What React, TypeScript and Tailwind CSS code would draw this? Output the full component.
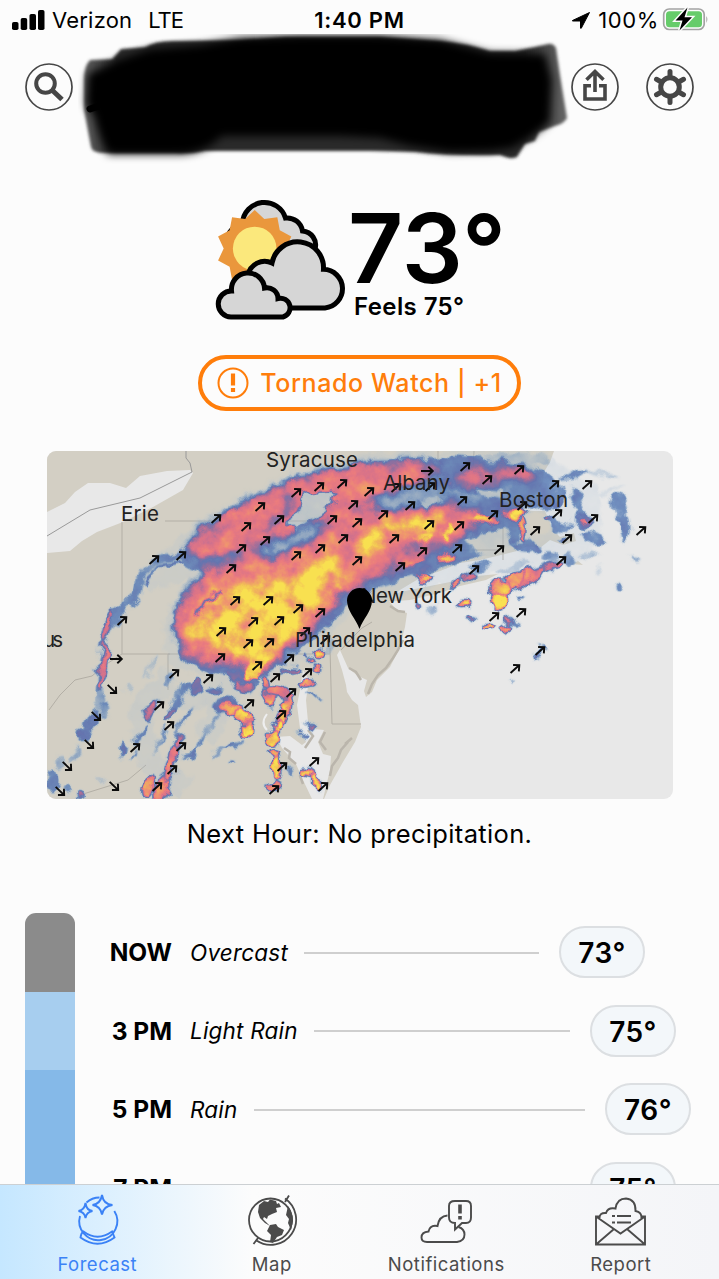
import type { ReactNode } from "react";

const hours = [
  { time: "NOW", summary: "Overcast", temp: 73, bar: "bg-[#8b8b8b]", inset: "mr-[74px]" },
  { time: "3 PM", summary: "Light Rain", temp: 75, bar: "bg-[#a7ceef]", inset: "mr-[43px]" },
  { time: "5 PM", summary: "Rain", temp: 76, bar: "bg-[#85b9e8]", inset: "mr-[28px]" },
  { time: "7 PM", summary: "", temp: 75, bar: "bg-[#85b9e8]", inset: "mr-[43px]" },
];

const cities = [
  { name: "Syracuse", x: 266, y: 467, width: 92 },
  { name: "Erie", x: 121, y: 521, width: 38 },
  { name: "Albany", x: 383, y: 490, width: 67 },
  { name: "Boston", x: 499, y: 507, width: 69 },
  { name: "New York", x: 361, y: 603, width: 91 },
  { name: "us", x: 43, y: 647, width: 20 },
  { name: "Philadelphia", x: 295, y: 647, width: 120 },
];

// wind markers: x, y
const windNE = [
  [216, 519], [154, 560], [181, 556], [260, 507], [246, 527], [241, 549], [231, 569], [265, 541],
  [279, 520], [296, 493], [319, 487], [342, 484], [353, 505], [332, 520], [357, 523], [343, 539],
  [320, 549], [296, 556], [357, 561], [235, 601], [268, 601], [298, 609], [320, 613], [253, 622],
  [279, 621], [122, 621], [369, 492], [396, 488], [465, 467], [487, 480], [519, 470], [554, 485],
  [587, 485], [430, 487], [383, 515], [410, 506], [462, 501], [429, 525], [493, 515], [459, 526],
  [394, 539], [522, 506], [557, 514], [593, 519], [535, 531], [567, 539], [641, 531], [422, 552],
  [457, 549], [499, 550], [561, 561], [400, 567], [474, 570], [494, 617], [521, 613], [515, 669],
  [540, 651], [221, 632], [248, 644], [269, 643], [220, 658], [257, 666], [289, 659], [275, 678],
  [307, 673], [208, 679], [174, 674], [159, 706], [169, 726], [135, 748], [181, 747], [172, 770],
  [157, 787], [249, 704], [291, 693], [281, 715], [282, 767], [274, 790], [314, 762], [323, 787],
  [305, 632], [325, 640],
];
const windSE = [[112, 689], [96, 716], [89, 744], [67, 766], [114, 786], [60, 791]];
const windE = [[427, 471], [116, 659]];

// small echoes: x, y, rx, ry, rotation, intensity (0-255)
const cells = [
  [108, 630, 3, 16, 15, 165], [103, 665, 3, 24, 6, 170], [100, 700, 7, 12, 0, 60], [92, 722, 7, 12, 20, 95],
  [84, 735, 6, 9, 0, 100], [105, 712, 5, 9, 0, 75], [75, 755, 4, 10, 30, 60], [60, 762, 6, 8, 20, 55],
  [52, 780, 6, 11, 0, 90], [66, 790, 6, 5, 0, 70], [80, 795, 4, 3, 0, 120], [100, 780, 5, 3, 0, 40],
  [150, 712, 4, 10, 35, 145], [170, 712, 3.5, 12, 25, 120], [140, 735, 3, 11, 25, 85], [122, 752, 3, 8, 10, 105],
  [135, 755, 2, 9, 30, 80], [160, 740, 2.5, 16, 30, 70], [185, 720, 2.5, 20, 30, 75], [176, 700, 4, 9, 30, 85],
  [148, 786, 4, 10, 10, 205], [162, 788, 6, 15, 20, 195], [172, 762, 4.5, 20, 18, 180], [179, 742, 2.5, 8, 15, 155],
  [190, 752, 3, 11, 45, 85], [208, 730, 3, 20, 35, 75], [218, 752, 3, 10, 40, 60], [235, 744, 12, 2, -20, 90],
  [232, 760, 3, 2, 0, 100], [170, 680, 9, 5, -40, 75], [195, 686, 8, 7, -35, 115], [150, 665, 3, 12, 20, 45],
  [130, 690, 4, 6, 0, 40], [215, 690, 9, 4, 0, 100], [240, 680, 18, 5, 20, 110], [245, 686, 8, 4, 20, 165],
  [184, 690, 3, 11, 10, 90], [225, 705, 12, 8, -20, 100], [233, 709, 12, 5, 10, 205], [243, 716, 8, 6, 30, 215],
  [248, 729, 3.5, 8, -5, 240], [270, 698, 6, 10, 10, 195], [279, 692, 12, 5, 20, 185], [288, 704, 3.5, 11, 5, 220],
  [280, 719, 3.5, 9, 25, 225], [276, 728, 3, 7, 10, 240], [272, 737, 4.5, 6, 0, 225], [276, 765, 3.5, 14, 0, 240],
  [275, 787, 7, 4, 10, 210], [273, 753, 4.5, 3, 0, 210], [288, 770, 4, 6, 0, 80], [309, 774, 8, 2.5, 10, 240],
  [317, 784, 3, 8, -8, 245], [308, 685, 8, 2, 0, 230], [316, 669, 5, 2.5, 0, 245], [291, 670, 9, 3, -10, 130],
  [313, 696, 8, 2, 0, 95], [311, 725, 4, 2, 0, 150], [302, 734, 5, 1.5, 0, 120], [322, 653, 3.5, 3.5, 0, 225],
  [313, 660, 3, 1.5, 0, 200], [306, 656, 2, 2, 0, 130], [330, 645, 5, 7, 0, 50], [265, 683, 3.5, 6, 0, 180],
  [546, 568, 14, 4, -25, 175], [530, 577, 16, 5, -35, 190], [512, 583, 14, 6, -30, 205], [499, 590, 8, 8, 0, 210],
  [498, 602, 6.5, 7, 0, 255], [425, 577, 8, 1.5, 0, 230], [455, 585, 2.5, 4, 0, 190], [467, 577, 8, 2.5, -25, 150],
  [462, 603, 6, 2, -15, 220], [418, 605, 3, 2, 0, 150], [432, 611, 4, 6, 30, 55], [470, 617, 3, 1.5, -10, 150],
  [488, 625, 4, 1.5, 0, 240], [505, 627, 5, 2, -20, 240], [511, 620, 3.5, 2, 0, 200], [517, 623, 4, 2.5, 0, 90],
  [535, 656, 6, 2.5, -40, 120], [543, 650, 4, 3, -30, 70], [511, 680, 3, 1.5, -25, 75], [520, 596, 5, 1.5, 0, 120],
  [600, 474, 20, 3, 12, 42], [612, 490, 14, 3, -20, 25], [620, 508, 8, 14, -20, 80], [626, 530, 5, 14, 0, 85],
  [582, 520, 9, 9, 0, 100], [581, 521, 3.5, 2.5, 0, 175], [594, 538, 12, 6, 20, 80], [634, 557, 8, 3, 10, 66],
  [620, 586, 4, 4, 0, 80], [600, 570, 3, 4, 0, 35], [570, 559, 9, 7, -20, 70], [548, 556, 8, 5, 0, 70],
  [577, 500, 5, 16, -25, 80], [515, 568, 18, 5, -20, 45], [480, 566, 12, 4, -10, 75], [562, 540, 4, 2, 0, 130],
  [550, 519, 6, 2, 10, 150], [575, 475, 14, 3, -25, 80], [590, 555, 7, 4, 0, 50], [527, 546, 14, 7, 0, 85],
  [560, 525, 14, 6, 20, 85],
];

function RadarMap() {
  return (
    <svg
      viewBox="47 451 626 348"
      role="img"
      aria-label="Precipitation radar"
      className="mx-auto h-[348px] w-[626px] shrink-0 rounded-[9px]"
    >
      <defs>
        <filter id="radar" filterUnits="userSpaceOnUse" x="37" y="441" width="646" height="368" colorInterpolationFilters="sRGB">
          <feTurbulence type="fractalNoise" baseFrequency="0.06" numOctaves="3" seed="7" result="warp" />
          <feGaussianBlur in="SourceGraphic" stdDeviation="1" result="soft" />
          <feDisplacementMap in="soft" in2="warp" scale="15" xChannelSelector="R" yChannelSelector="G" result="field" />
          <feTurbulence type="fractalNoise" baseFrequency="0.05" numOctaves="5" seed="21" />
          <feColorMatrix values="1 0 0 0 0  1 0 0 0 0  1 0 0 0 0  0 0 0 0 1" result="grain" />
          <feComposite in="field" in2="grain" operator="arithmetic" k1="0.7" k2="0.66" k3="0" k4="0" result="level" />
          <feColorMatrix in="level" values="0 0 0 0 0  0 0 0 0 0  0 0 0 0 0  1 0 0 0 0" />
          <feComponentTransfer result="mask">
            <feFuncA type="table" tableValues="0 .2 .55 .85 .93 .96 .97 .97 .97 .97 .97" />
          </feComponentTransfer>
          <feComponentTransfer in="level">
            <feFuncR type="table" tableValues=".70 .62 .49 .36 .36 .56 .83 .92 .94 .95 .98" />
            <feFuncG type="table" tableValues=".79 .73 .62 .50 .43 .42 .43 .47 .58 .74 .88" />
            <feFuncB type="table" tableValues=".88 .83 .77 .72 .68 .61 .54 .49 .42 .33 .30" />
          </feComponentTransfer>
          <feComposite in2="mask" operator="in" />
          <feGaussianBlur stdDeviation="0.5" />
        </filter>
        <filter id="spread" filterUnits="userSpaceOnUse" x="37" y="441" width="646" height="368" colorInterpolationFilters="sRGB">
          <feGaussianBlur stdDeviation="4" />
        </filter>
        <path id="wind" d="M-6 0H5.500M1.300 -4.300L5.800 0L1.300 4.300" fill="none" stroke="#0b0b0b" strokeWidth="1.9" />
      </defs>

      <rect x="47" y="451" width="626" height="348" fill="#e8e8e8" />
      <path
        fill="#d3cfc4"
        d="M47 451H554L550 462L544 472L543 482L537 492L529 500L524 510L533 511L545 511L549 520L553 530L560 537L574 533L576 541L563 545L550 540L540 548L528 546L517 551L497 556L480 560L460 563L440 571L420 578L400 590L388 600L396 609L407 613L405 627L400 647L390 667L377 680L372 692L366 697L364 691L367 680L358 676L348 668L340 650L337 655L342 670L346 685L347 692L352 700L358 705L361 727L355 742L343 762L330 785L324 799H47Z"
      />
      <path fill="#d3cfc4" d="M384 602L400 592L425 587L450 582L466 577L498 574L486 580L460 586L440 593L410 600ZM572 564L578 561L583 565Z" />
      <path
        fill="#e8e8e8"
        d="M47 512L65 503L75 492L88 483L110 483L126 488L140 476L167 471L190 470L193 473L183 490L153 507L123 522L97 532L82 541L70 551L47 553Z"
      />
      <path
        fill="#e8e8e8"
        d="M303 670L309 680L306 700L308 722L314 729L324 730L318 742L323 754L331 756L330 770L323 799H312L303 780L296 764L282 748L276 737L290 736L302 745L306 742L300 728L297 705L300 690Z"
      />
      <g fill="none" stroke="#b3afa6" strokeWidth="1">
        <path d="M47 536L90 510L140 498L192 472L190 463L186 458V451" stroke="#999" />
        <path d="M122 522V654H170M122 654L105 665L92 676L75 680L60 695L49 710" />
        <path d="M165 521H340M168 654H330M330 648L332 724H361M168 654V690M438 451V560M474 451L472 490M503 500V560M421 550H500" />
        <path d="M341 650L350 640L362 628L372 622M146 765L128 780L80 795" />
        <path
          d="M308 730L313 736L309 742L305 748M284 748L290 752L289 758L296 764M306 770L300 776L303 784M348 742L341 750L338 758L332 766L330 776M325 732L320 742L326 750"
          stroke="#bab5ac"
          strokeWidth="2.500"
        />
        <path
          d="M403 640L398 650L393 658L386 668L378 675L372 684L368 694M390 606L398 611L405 612M349 668L356 672L361 680M345 744L352 738"
          stroke="#bbb6ac"
          strokeWidth="2.500"
        />
        <path d="M267 714Q260 723 267 730" stroke="#eee" strokeWidth="2" />
      </g>

      <g filter="url(#radar)">
        <rect x="37" y="441" width="646" height="368" fill="#000" />
        {/* faint halo */}
        <path
          fill="#141414"
          d="M200 520L260 488L330 462L380 450H545L575 475L600 488L602 540L580 560L545 568L500 572L440 585L350 612L310 660L240 690L165 665L165 620L185 580L150 590L140 570Z"
        />
        <path fill="none" stroke="#161616" strokeWidth="24" d="M172 672L140 715L150 760L185 790M170 700L230 690L205 740" />
        {/* rain shield */}
        <path
          fill="#585858"
          d="M182 552L200 530L235 507L265 492L295 478L330 470L375 461L430 457L500 461L545 474L560 484L565 495L560 508L540 505L520 512L522 535L508 548L490 552L460 560L435 571L400 580L370 590L345 605L330 625L300 650L280 668L245 682L215 675L190 665L174 645L172 622L182 597L205 573L186 566Z"
        />
        <path fill="none" stroke="#505050" strokeWidth="8" d="M190 553L160 560L142 576L136 596L118 615L108 630L102 660L99 690" />
        <path fill="none" stroke="#808080" strokeWidth="2.500" d="M185 562L162 566L146 583" />
        <g filter="url(#spread)">
          <path
            fill="#aaa"
            d="M186 552L200 530L237 506L270 491L300 477L330 470L375 463L425 460L445 466L430 480L395 490L365 500L350 520L325 530L310 532L280 545L245 555L220 552L200 558Z"
          />
          <path
            fill="#acacac"
            d="M175 638L177 615L187 590L208 571L245 558L290 545L325 530L342 505L375 505L400 508L450 506L480 510L475 525L462 536L440 552L405 566L370 580L340 596L320 620L290 650L258 674L225 664L190 657Z"
          />
          <path fill="#989898" d="M450 478L480 470L525 464L535 474L500 482L470 496L445 502Z" />
          <path
            fill="#bababa"
            d="M181 636L187 606L203 583L250 568L290 556L330 546L360 525L395 512L440 508L450 520L430 540L395 550L365 567L340 590L318 618L285 648L257 668L225 657L195 650Z"
          />
          <path
            fill="#dadada"
            d="M188 634L194 612L208 592L250 582L290 566L330 555L346 563L338 590L316 614L285 646L260 672L245 664L222 648Z"
          />
          <path
            fill="#f2f2f2"
            d="M204 627L212 605L250 597L285 580L322 566L334 576L324 597L298 622L282 645L258 668L248 660L262 634L240 638L215 642Z"
          />
          <ellipse cx="374" cy="540" rx="22" ry="8" fill="#eee" transform="rotate(-28 374 540)" />
          <ellipse cx="422" cy="522" rx="18" ry="9" fill="#f2f2f2" />
        </g>
        <path fill="#f0f0f0" d="M248 645L275 640L256 682L247 678Z" />
        <ellipse cx="448" cy="533" rx="3" ry="8" fill="#e8e8e8" />
        <ellipse cx="424" cy="536" rx="10" ry="2.500" fill="#ececec" />
        <ellipse cx="483" cy="520" rx="14" ry="6" fill="#b8b8b8" />
        <ellipse cx="483" cy="520" rx="10" ry="4" fill="#e8e8e8" />
        <ellipse cx="515" cy="515" rx="12" ry="6" fill="#b8b8b8" />
        <ellipse cx="515" cy="515" rx="9" ry="4" fill="#eee" />
        <ellipse cx="524" cy="530" rx="3" ry="10" fill="#e0e0e0" />
        <ellipse cx="446" cy="558" rx="11" ry="3" fill="#e0e0e0" transform="rotate(-20 446 558)" />
        <ellipse cx="412" cy="561" rx="9" ry="3" fill="#ccc" transform="rotate(-20 412 561)" />
        {/* dry slots */}
        <g filter="url(#spread)">
          <path fill="none" stroke="#303030" strokeWidth="13" d="M264 552L292 542L320 524" />
          <path fill="none" stroke="#484848" strokeWidth="5" d="M292 497L280 520L262 532" />
          <path fill="none" stroke="#383838" strokeWidth="12" d="M378 503L410 497L450 491L480 498" />
          <path fill="none" stroke="#505050" strokeWidth="5" d="M405 551L422 545L440 543M385 575L410 567L435 556" />
        </g>
        <path fill="none" stroke="#606060" strokeWidth="3.500" d="M196 616L204 604L222 594" />
        <path fill="#202020" d="M304 493L334 490L331 503L322 516L295 531L288 525L298 510Z" />
        <path fill="none" stroke="#2c2c2c" strokeWidth="8" d="M478 490L502 494M475 545L510 534M425 503L440 498" />
        <path fill="#1c1c1c" d="M465 538L505 528L512 548L480 554Z" />
        <path fill="#2c2c2c" d="M480 456L545 452L548 466L500 462Z" />
        <ellipse cx="540" cy="523" rx="12" ry="13" fill="#000" />
        {cells.map(([x, y, rx, ry, rot, level], i) => (
          <g key={i} transform={`translate(${x} ${y}) rotate(${rot})`}>
            {level > 130 && <ellipse rx={rx + 2} ry={ry + 2} fill="#505050" />}
            {level > 200 && <ellipse rx={rx + 1} ry={ry + 1} fill="#a8a8a8" />}
            <ellipse rx={rx} ry={ry} fill={`rgb(${level},${level},${level})`} />
          </g>
        ))}
      </g>

      <g>
        {windNE.map(([x, y], i) => (
          <use key={i} href="#wind" transform={`translate(${x} ${y}) rotate(-42)`} />
        ))}
        {windSE.map(([x, y], i) => (
          <use key={i} href="#wind" transform={`translate(${x} ${y}) rotate(44)`} />
        ))}
        {windE.map(([x, y], i) => (
          <use key={i} href="#wind" transform={`translate(${x} ${y})`} />
        ))}
      </g>
      {cities.map((city) => (
        <text
          key={city.name}
          x={city.x}
          y={city.y}
          textLength={city.width}
          className="fill-[#222] font-['Inter',sans-serif] text-[20.500px]"
        >
          {city.name}
        </text>
      ))}
      <path d="M359.500 629C356 619 347 611 347 600.500A12.500 12.500 0 0 1 372 600.500C372 611 363 619 359.500 629Z" fill="#000" />
    </svg>
  );
}

function WeatherIcon() {
  const rays = Array.from({ length: 20 }, (_, i) => {
    const r = i % 2 ? 31 : 38.5;
    const a = (i * Math.PI) / 10;
    return `${254.7 + r * Math.sin(a)},${248.5 - r * Math.cos(a)}`;
  }).join(" ");

  return (
    <svg viewBox="214 198 134 124" className="h-[124px] w-[134px]">
      <g fill="#d6d6d6" stroke="#000" strokeWidth="5">
        <path d="M227 238Q231 226 242.500 223A22 22 0 0 1 285.500 218A15.500 15.500 0 0 1 302.500 231A14 14 0 0 1 315 249L300 270H250Z" />
        <polygon points={rays} fill="#ea973c" stroke="none" />
        <circle cx="254.700" cy="248.500" r="21.800" fill="#fbe87c" stroke="none" />
        <path d="M248 275A17 17 0 0 1 272 263A26 26 0 0 1 323.500 269.300A19.400 19.400 0 0 1 325 308H262Z" />
        <path d="M231 317A13 13 0 0 1 231.500 291A16 16 0 0 1 264.500 288A11 11 0 0 1 278 298.500A9.500 9.500 0 0 1 283 317Z" />
      </g>
    </svg>
  );
}

function StatusBar() {
  return (
    <div className="flex h-10 shrink-0 items-center justify-between pr-[9px] pl-3 text-[22px] leading-none">
      <div className="flex w-[240px] items-center">
        <svg viewBox="0 0 33 20" className="h-5 w-[33px]">
          <rect y="12" width="6.500" height="8" rx="1.800" />
          <rect x="8.700" y="8" width="6.500" height="12" rx="1.800" />
          <rect x="17.500" y="4" width="6.500" height="16" rx="1.800" />
          <rect x="26" width="6.500" height="20" rx="1.800" />
        </svg>
        <span className="ml-[7px] tracking-[0.2px]">Verizon</span>
        <span className="ml-4 tracking-[-1px]">LTE</span>
      </div>
      <span className="-ml-[3px] font-semibold tracking-[0.700px]">1:40 PM</span>
      <div className="flex w-[240px] items-center justify-end">
        <svg viewBox="0 0 18 17" className="h-[17px] w-[18px]">
          <path d="M17.500 0.500L0.500 8.500Q0 9 .8 9H8.500V16Q8.700 17 9.400 16Z" stroke="#000" strokeWidth="1" />
        </svg>
        <span className="ml-2 tracking-[0.600px]">100%</span>
        <svg viewBox="0 0 48 26" className="ml-[3px] h-[26px] w-[48px]">
          <rect x="1.700" y="2" width="40.500" height="20.500" rx="5.500" fill="none" stroke="#a3a3a3" strokeWidth="1.700" />
          <rect x="4" y="4.300" width="36" height="16" rx="3.500" fill="#66cc6a" />
          <path d="M44.300 9Q46.500 12 44.300 16Z" fill="#a3a3a3" />
          <path d="M25.500 .5L13.500 13.500H20.500L17.500 23.500L30 10.300H22.500Z" stroke="#fcfcfc" strokeWidth="3" paintOrder="stroke" />
        </svg>
      </div>
    </div>
  );
}

function RoundButton({ label, children }: { label: string; children: ReactNode }) {
  return (
    <button aria-label={label} className="h-12 w-12">
      <svg viewBox="0 0 48 48" fill="none" stroke="#464646" className="h-12 w-12">
        <circle cx="24" cy="24" r="23" strokeWidth="1.700" />
        {children}
      </svg>
    </button>
  );
}

function Header() {
  return (
    <header className="relative flex h-[94px] shrink-0 items-center pr-[25px] pl-[25px]">
      <RoundButton label="Search">
        <circle cx="20.500" cy="20.500" r="9.300" strokeWidth="4" />
        <path d="M27.500 27.500L37 36.500" strokeWidth="5" />
      </RoundButton>
      <div className="ml-auto flex gap-[27px]">
        <RoundButton label="Share">
          <path d="M20 22.700H14V36H34V22.700H28M24 29V9M15.500 16.700L24 8.500L32.500 16.700" strokeWidth="3.600" />
        </RoundButton>
        <RoundButton label="Settings">
          <circle cx="24" cy="24" r="9.300" strokeWidth="5" />
          <path
            d="M24 14V8.500M24 34V39.500M15.300 19L10.500 16.300M32.700 19L37.500 16.300M15.300 29L10.500 31.700M32.700 29L37.500 31.700"
            strokeWidth="5"
            strokeLinecap="round"
          />
        </RoundButton>
      </div>
      {/* marker strokes covering the place name */}
      <svg viewBox="78 34 496 130" className="absolute -top-[6px] left-[78px] h-[130px] w-[496px]">
        <defs>
          <filter id="edge">
            <feGaussianBlur stdDeviation="1.500" />
          </filter>
          <filter id="ink">
            <feGaussianBlur stdDeviation="4" />
          </filter>
          <linearGradient id="side" x1="78" x2="574" gradientUnits="userSpaceOnUse">
            <stop offset="0" stopColor="#666" />
            <stop offset=".08" stopColor="#2a2a2a" />
            <stop offset=".9" stopColor="#2a2a2a" />
            <stop offset="1" stopColor="#707070" />
          </linearGradient>
        </defs>
        <path
          filter="url(#edge)"
          fill="url(#side)"
          d="M90 60L112 59L121 49L145 47Q155 41 172 41L240 40L285 37H380L440 41Q465 43 490 51H515Q535 47 548 44Q553 43 556 48L560 75L567 118Q565 123 555 126L539 132L535 141L525 144L517 157Q511 160 500 155Q450 156 415 152L370 151H205Q190 154 175 153H105Q92 153 91 147L84 110L84 80Q84 66 90 60Z"
        />
        <path
          filter="url(#ink)"
          d="M88 74L118 60L150 49L200 45L240 38L300 36H380L440 40L490 53L545 54L552 80L550 122L535 134L512 148L490 151L450 152L410 146L380 138L340 136H222Q205 153 180 154H108Q100 140 94 116L86 105Z"
        />
        <path d="M90 109L96 107" stroke="#000" strokeWidth="7" strokeLinecap="round" />
      </svg>
    </header>
  );
}

const tabs: { label: string; icon: ReactNode; active?: boolean }[] = [
  {
    label: "Forecast",
    active: true,
    icon: (
      <g strokeWidth="1.900">
        <path d="M10 24A19 19 0 1 0 44.300 19M16.500 10.500Q22 5.500 29.500 5.500" />
        <path d="M32 3Q33.500 12.500 42.500 13Q33.500 14 32 22.500Q30.500 14 22.500 13Q30.500 12 32 3Z" />
        <path d="M15.500 11Q16.500 18.500 22.500 19Q16.500 20 15.500 26Q14.500 20 8.500 19Q14.500 18 15.500 11Z" />
        <path d="M13.500 39.500Q11 41 10.500 45.500Q27.500 58 44.500 45.500L42 39.500Q27.500 50 13.500 39.500Z" />
      </g>
    ),
  },
  {
    label: "Map",
    icon: (
      <g strokeWidth="1.800">
        <circle cx="26.500" cy="28" r="21.500" />
        <path d="M41 6.500A25 25 0 1 1 12.500 48.500M41 10L45 3.500M14 46L9.500 52" />
        <path
          d="M15 13L20 9L24 10L26 7.500L32 9L33 12L35 11L37 15L32 16L33 20L28 22L24 24L23 27L20 25L19 27L22 30L26 34L21 31L16 26L14 20Z M26 33L32 32L34 35L40 38L38 43L33 45L29 51L26 50L27 43L23 39Z M44 14Q49 21 49 29L47 38L44 31L45 27L42 23Z"
          fill="currentColor"
          stroke="none"
        />
      </g>
    ),
  },
  {
    label: "Notifications",
    icon: (
      <g strokeWidth="1.900">
        <path d="M28.500 23.500Q20 24 18.500 34Q11 32.500 9.500 39.500Q2.500 40 2.500 45.500Q2.500 50 8 50H38Q45.500 49 45.500 42.500Q45.500 37 39.500 35" />
        <path d="M36 9H47Q52 9 52 14V25.500Q52 31 47 31H43L36 37.500V31Q30 31 30 25.500V14Q30 9 36 9Z" />
        <path d="M41 12.500V21.500M41 24V27.500" strokeWidth="3.600" />
      </g>
    ),
  },
  {
    label: "Report",
    icon: (
      <g strokeWidth="1.900">
        <path d="M7 24.500H3V52.500H52V24.500H48M3 24.500L27.500 41.500L52 24.500M3 52.500L21 37M52 52.500L34 37" />
        <path d="M6.500 26Q6.500 20.500 13 21Q15 15 22.500 16.500Q24 6.500 33 6.500Q43 7.500 42.500 19Q49 20 48.500 26.500" />
        <path d="M24 24H38M24 30.500H38M19 24H22M19 30.500H22" strokeWidth="2.100" />
      </g>
    ),
  },
];

function TabBar() {
  return (
    <nav className="flex h-[95px] shrink-0 border-t border-[#ccd0d3] bg-linear-to-r from-[#c5e7ff] via-[#fcfcfc] via-35% to-[#f4f5f8] pr-[11px] pl-[10px]">
      {tabs.map((tab) => (
        <div
          key={tab.label}
          className={`flex flex-1 flex-col items-center pt-[7px] ${tab.active ? "text-[#3b82f6]" : "text-[#4b4b4b]"}`}
        >
          <svg viewBox="0 0 55 56" fill="none" stroke="currentColor" className="h-[56px] w-[55px]">
            {tab.icon}
          </svg>
          <span className="mt-[5px] text-[18.500px] leading-[22px] tracking-[0.5px]">{tab.label}</span>
        </div>
      ))}
    </nav>
  );
}

export default function App() {
  return (
    <div className="flex h-[1279px] w-[719px] flex-col overflow-hidden bg-[#fcfcfc] font-['Inter',sans-serif] text-black">
      <StatusBar />
      <Header />
      <main className="flex min-h-0 flex-1 flex-col overflow-hidden pt-[64px]">
        <section className="flex h-[124px] shrink-0 items-start pl-[214px]">
          <WeatherIcon />
          <div className="pt-[8px]">
            <p className="text-[96px] leading-[84px] font-semibold">73°</p>
            <p className="mt-[2px] pl-[6px] text-[24px] leading-[30px] font-semibold tracking-[0.400px]">Feels 75°</p>
          </div>
        </section>

        <button className="mx-auto mt-[33px] flex h-14 w-[323px] shrink-0 items-center justify-center gap-[11px] rounded-full border-4 border-[#ff7d0a] text-[25px] font-medium text-[#ff7d0a]">
          <svg viewBox="0 0 32 32" fill="none" stroke="currentColor" className="h-8 w-8">
            <circle cx="16" cy="16" r="14.500" strokeWidth="2" />
            <path d="M16 6.500V18.500M16 21V25" strokeWidth="4.200" />
          </svg>
          <span className="pt-px tracking-[0.600px] whitespace-nowrap">Tornado Watch | +1</span>
        </button>

        <div className="mt-10 flex shrink-0">
          <RadarMap />
        </div>
        <p className="mt-[19px] text-center text-[25.500px] leading-8 tracking-[0.350px]">Next Hour: No precipitation.</p>

        <section className="mt-[63px] flex flex-col">
          {hours.map((hour, i) => (
            <div key={hour.time} className="flex h-[78.500px] shrink-0 items-center">
              <div className={`ml-[25px] h-full w-[50px] shrink-0 ${hour.bar} ${i === 0 ? "rounded-t-[11px]" : ""}`} />
              <span className="w-[97px] shrink-0 pt-px text-right text-[24.500px] font-bold">{hour.time}</span>
              <span className="ml-[18px] pt-px text-[22.500px] tracking-[0.200px] whitespace-nowrap italic">{hour.summary}</span>
              <div className="mt-px mr-5 ml-4 h-[2px] flex-1 bg-[#cfcfcf]" />
              <div
                className={`flex h-[52px] w-[86px] shrink-0 items-center justify-center rounded-full border-2 border-[#dcdfe2] bg-[#f3f7fa] pt-[2px] text-[28px] font-semibold tracking-[0.500px] ${hour.inset}`}
              >
                {hour.temp}°
              </div>
            </div>
          ))}
        </section>
      </main>
      <TabBar />
    </div>
  );
}
